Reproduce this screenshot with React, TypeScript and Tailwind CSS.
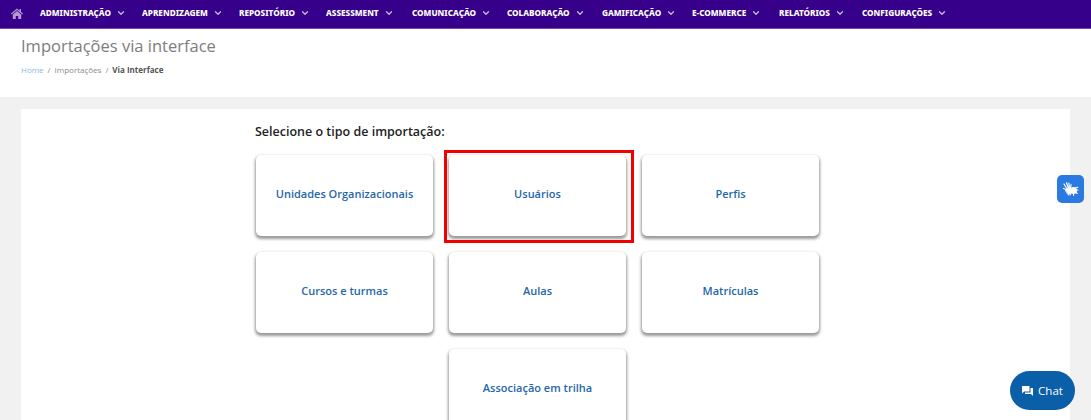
import { ChevronDown } from "lucide-react";

const nav: [string, string][] = [
  ["ADMINISTRAÇÃO", "w-[102px]"],
  ["APRENDIZAGEM", "w-[97px]"],
  ["REPOSITÓRIO", "w-[87px]"],
  ["ASSESSMENT", "w-[86px]"],
  ["COMUNICAÇÃO", "w-[95px]"],
  ["COLABORAÇÃO", "w-[95px]"],
  ["GAMIFICAÇÃO", "w-[90px]"],
  ["E-COMMERCE", "w-[87px]"],
  ["RELATÓRIOS", "w-[83px]"],
  ["CONFIGURAÇÕES", "w-[100px]"],
];

function Card({ label }: { label: string }) {
  return (
    <div className="h-[81px] pb-[2px] rounded-[5px] bg-white shadow-[0_2px_3px_1px_rgba(0,0,0,0.4)] flex items-center justify-center text-[11px] font-semibold text-[#1f67a8]">
      {label}
    </div>
  );
}

export default function App() {
  return (
    <div className="relative h-[420px] w-[1091px] overflow-hidden bg-[#f1f1f1] font-['Open_Sans',sans-serif]">
      <nav className="h-[29px] pb-[2px] bg-[#36008a] border-b border-[#7a45b5] flex items-center pl-[11px] text-white">
        <svg width="12" height="11" viewBox="0 0 12 11" fill="#b39ad4" className="mr-[17px]">
          <path d="M6 0.5 0 5.6l.7.8L6 2l5.3 4.4.7-.8-2-1.7V1H8.6v1.7z" />
          <path d="M6 3 1.8 6.5V11h3V8h2.400v3h3V6.500z" />
        </svg>
        {nav.map(([t, w]) => (
          <div key={t} className={`flex items-center gap-[5px] ${w}`}>
            <span className="text-[8.2px] font-extrabold whitespace-nowrap font-['Noto_Sans',sans-serif]">{t}</span>
            <ChevronDown size={10} strokeWidth={3} className="text-[#c9bce0] shrink-0" />
          </div>
        ))}
      </nav>

      <header className="h-[68px] bg-white pl-[21px] pt-[6px]">
        <h1 className="text-[16.5px] leading-[22px] text-[#7d7d7d]">Importações via interface</h1>
        <div className="mt-[7px] flex items-center text-[8px] leading-[12px] text-[#8a8a8a]">
          <span className="text-[#8db8e0]">Home</span>
          <span className="mx-[4px]">/</span>
          <span>Importações</span>
          <span className="mx-[4px]">/</span>
          <span className="font-bold text-[#555]">Via Interface</span>
        </div>
      </header>

      <main className="mt-[12px] ml-[21px] w-[1049px] h-[400px] bg-white pl-[235px] pt-[14px]">
        <h2 className="text-[12.5px] leading-[18px] font-semibold text-[#222] -ml-[1px]">Selecione o tipo de importação:</h2>
        <div className="mt-[14px] grid grid-cols-[177px_177px_177px] gap-x-[16px] gap-y-[16px]">
          <Card label="Unidades Organizacionais" />
          <Card label="Usuários" />
          <Card label="Perfis" />
          <Card label="Cursos e turmas" />
          <Card label="Aulas" />
          <Card label="Matrículas" />
          <div />
          <Card label="Associação em trilha" />
        </div>
      </main>

      <div className="absolute left-[444px] top-[150px] w-[190px] h-[93px] border-[3px] border-[#f00000]" />

      <div className="absolute left-[1057px] top-[175px] w-[27px] h-[28px] rounded-[5px] bg-[#2a7ae2] flex items-center justify-center">
        <svg width="19" height="19" viewBox="0 0 19 19" fill="none" stroke="#fff" strokeLinecap="round">
          <path d="M6 9 3 4M7.300 8 5.500 2.800M8.500 8 7.800 3M9.500 9 10 4.500M6 10 2.500 8.500" strokeWidth="1.200" />
          <path d="M4.500 10.500c1-2.500 4-3 5-1.500l.5 3.500-2.500 2.500z" fill="#fff" strokeWidth="0.600" />
          <circle cx="12.500" cy="10.500" r="3.500" fill="#fff" stroke="none" />
          <path d="M14 8l2.800-.8M15 10h2M14.500 12l1.800 1.500M12.500 13.500v2M10 13l-1 2" strokeWidth="1.100" />
        </svg>
      </div>

      <div className="absolute left-[1010px] top-[371px] w-[65px] h-[39px] rounded-[20px] bg-[#0b5ea8] flex items-center justify-center gap-[5px] text-white text-[11.5px]">
        <svg width="11" height="10" viewBox="0 0 11 10" fill="#fff">
          <path d="M0 0h7.500v5.500H2L0 7.500z" />
          <path d="M8.500 2H11v8L9 8H3V6.500h5.500z" />
        </svg>
        <span>Chat</span>
      </div>
    </div>
  );
}
